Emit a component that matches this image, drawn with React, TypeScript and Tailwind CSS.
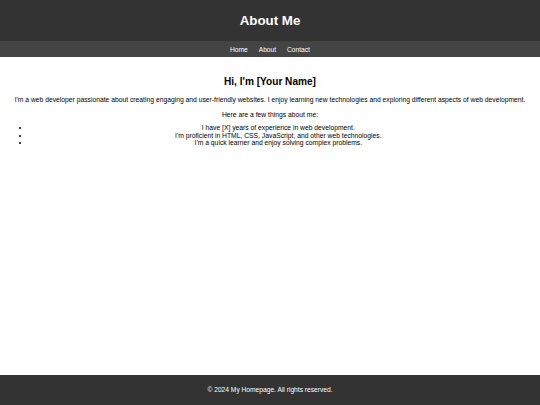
import React from "react";

export default function App() {
  return (
    <div
      className="flex min-h-screen flex-col bg-white text-black"
      style={{ fontFamily: '"Liberation Sans", Arial, sans-serif' }}
    >
      <header className="bg-[#333333] py-[4.17px] text-center text-white">
        <h1 className="my-[8.93px] text-[13.33px] font-bold leading-[1.15]">About Me</h1>
      </header>
      <nav className="flex justify-center gap-[10.9px] bg-[#444444] py-[4.17px] text-[6.67px] leading-[1.15] text-white">
        <a href="#">Home</a>
        <a href="#">About</a>
        <a href="#">Contact</a>
      </nav>
      <main className="flex-1 px-[3.33px] pt-[18.5px] pb-[8.33px] text-center text-[6.75px] leading-[1.12]">
        <h2 className="mb-[8.5px] text-[10.1px] font-bold leading-[1.15]">Hi, I'm [Your Name]</h2>
        <p className="mb-[7px]">
          I'm a web developer passionate about creating engaging and user-friendly websites. I enjoy learning new technologies and exploring different aspects of web development.
        </p>
        <p className="mb-[6px]">Here are a few things about me:</p>
        <ul className="list-disc pl-[26.67px] pr-[10px]">
          <li>I have [X] years of experience in web development.</li>
          <li>I'm proficient in HTML, CSS, JavaScript, and other web technologies.</li>
          <li>I'm a quick learner and enjoy solving complex problems.</li>
        </ul>
      </main>
      <footer className="flex h-[30px] items-center justify-center bg-[#333333] text-[6.67px] leading-[1.15] text-white">
        <p>© 2024 My Homepage. All rights reserved.</p>
      </footer>
    </div>
  );
}
